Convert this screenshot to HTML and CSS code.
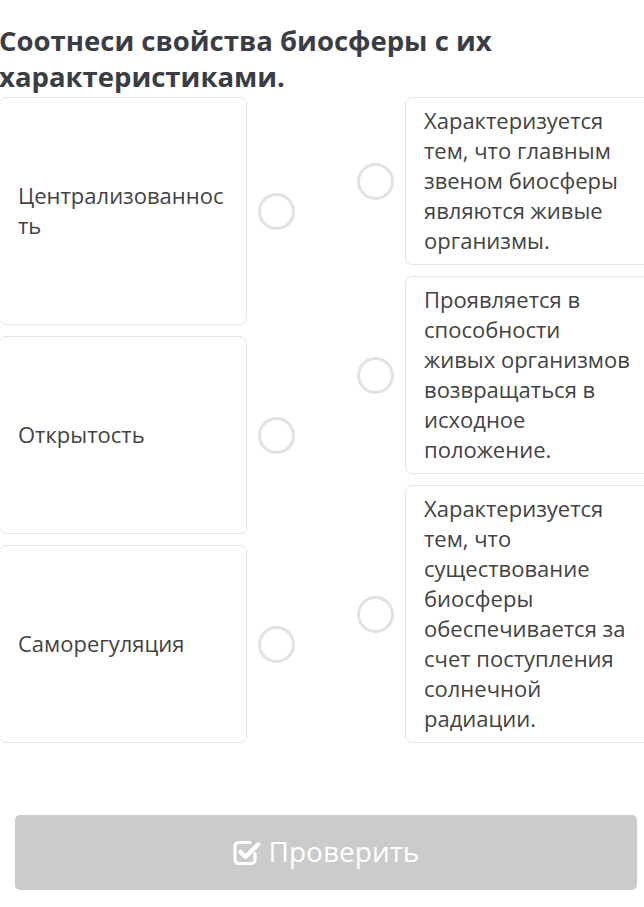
FILE: index.html
```html
<!DOCTYPE html>
<html lang="ru">
<head>
<meta charset="utf-8">
<link rel="stylesheet" href="styles.css">
</head>
<body>
<div class="page">
  <h1 class="title">Соотнеси свойства биосферы с их характеристиками.</h1>
  <div class="match">
    <div class="col col-left">
      <div class="row">
        <div class="card">Централизованность</div>
        <span class="dot"></span>
      </div>
      <div class="row">
        <div class="card">Открытость</div>
        <span class="dot"></span>
      </div>
      <div class="row">
        <div class="card">Саморегуляция</div>
        <span class="dot"></span>
      </div>
    </div>
    <div class="col col-right">
      <div class="row">
        <span class="dot"></span>
        <div class="card">Характеризуется тем, что главным звеном биосферы являются живые организмы.</div>
      </div>
      <div class="row">
        <span class="dot"></span>
        <div class="card">Проявляется в способности живых организмов возвращаться в исходное положение.</div>
      </div>
      <div class="row">
        <span class="dot"></span>
        <div class="card">Характеризуется тем, что существование биосферы обеспечивается за счет поступления солнечной радиации.</div>
      </div>
    </div>
  </div>
  <div class="actions">
    <button class="check-btn" type="button">
      <svg class="check-icon" viewBox="0 0 28 28" width="28" height="28" aria-hidden="true">
        <path d="M22 15.5 V22 a3.5 3.5 0 0 1 -3.5 3.5 H5.5 a3.5 3.5 0 0 1 -3.5 -3.5 V8 a3.5 3.5 0 0 1 3.5 -3.5 H17" fill="none" stroke="#fff" stroke-width="3.2" stroke-linecap="round"/>
        <path d="M7.5 14 L12.5 19 L25 6.5" fill="none" stroke="#fff" stroke-width="4.4" stroke-linecap="round" stroke-linejoin="round"/>
      </svg>
      <span>Проверить</span>
    </button>
  </div>
</div>
</body>
</html>
```
FILE: styles.css
```css
html, body {
  margin: 0;
  padding: 0;
  background: #fff;
}
body {
  width: 644px;
  height: 907px;
  overflow: hidden;
  font-family: "Open Sans", "Noto Sans", sans-serif;
}
.page {
  width: 670px;
  margin-left: -1px;
  padding-top: 23px;
}
.title {
  margin: 0 0 2px 0;
  font-size: 27.5px;
  line-height: 36px;
  font-weight: 700;
  color: #3a3d44;
  width: 560px;
}
.match {
  display: flex;
  gap: 62px;
  align-items: stretch;
}
.col {
  display: flex;
  flex-direction: column;
  gap: 11px;
}
.row {
  display: flex;
  align-items: center;
  gap: 11px;
  flex: 1 1 auto;
}
.col-left .row {
  align-items: stretch;
}
.col-left .dot {
  align-self: center;
}
.card {
  box-sizing: border-box;
  width: 248px;
  border: 1px solid #e6e6e6;
  border-radius: 7px;
  background: #fff;
  padding: 7px 16px 9px 18px;
  font-size: 22px;
  line-height: 30px;
  color: #434343;
  overflow-wrap: break-word;
  word-break: break-word;
}
.col-left .card {
  display: block;
  align-content: center;
}
.dot {
  box-sizing: border-box;
  flex: none;
  width: 37px;
  height: 37px;
  border: 3px solid #e2e2e2;
  border-radius: 50%;
  background: #fff;
}
.actions {
  padding: 72px 0 0 16px;
}
.check-btn {
  display: flex;
  align-items: center;
  justify-content: center;
  gap: 8px;
  width: 622px;
  height: 75px;
  border: none;
  border-radius: 5px;
  background: #cbcbcb;
  color: #fff;
  font-family: "Open Sans", "Noto Sans", sans-serif;
  font-size: 28px;
  padding: 0 0 4px 0;
}
.check-icon {
  display: block;
  margin-top: 2px;
}
```
